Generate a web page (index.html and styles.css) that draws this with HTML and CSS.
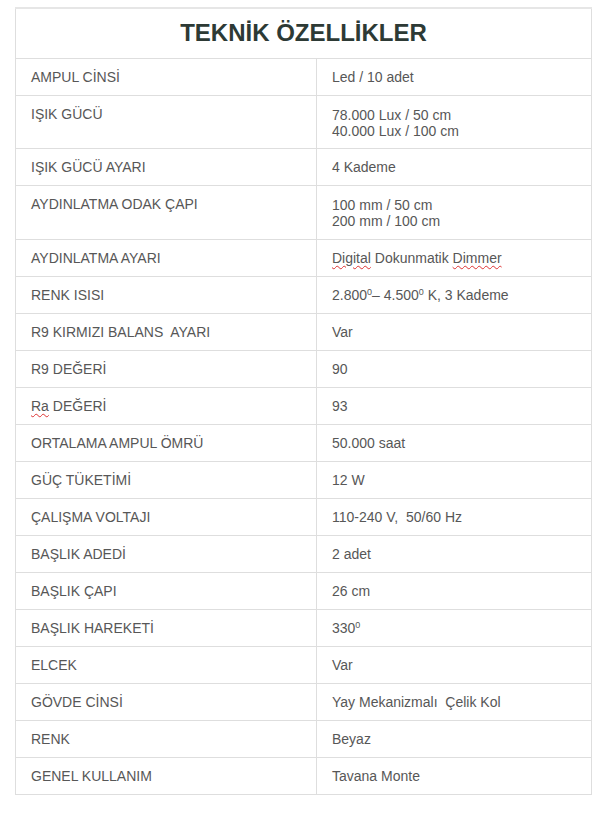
FILE: index.html
```html
<!DOCTYPE html>
<html lang="tr">
<head>
<meta charset="utf-8">
<title>Teknik Özellikler</title>
<link rel="stylesheet" href="styles.css">
</head>
<body>
<table class="spec">
  <colgroup><col class="col-key"><col class="col-val"></colgroup>
  <thead>
    <tr><th colspan="2" class="title">TEKNİK ÖZELLİKLER</th></tr>
  </thead>
  <tbody>
    <tr><td>AMPUL CİNSİ</td><td>Led / 10 adet</td></tr>
    <tr class="multi"><td>IŞIK GÜCÜ</td><td class="lines">78.000 Lux / 50 cm<br>40.000 Lux / 100 cm</td></tr>
    <tr><td>IŞIK GÜCÜ AYARI</td><td>4 Kademe</td></tr>
    <tr class="multi"><td>AYDINLATMA ODAK ÇAPI</td><td class="lines lines-tall">100 mm / 50 cm<br>200 mm / 100 cm</td></tr>
    <tr><td>AYDINLATMA AYARI</td><td><span class="spell">Digital</span> Dokunmatik <span class="spell">Dimmer</span></td></tr>
    <tr><td>RENK ISISI</td><td>2.800<sup>0</sup>– 4.500<sup>0</sup> K, 3 Kademe</td></tr>
    <tr><td>R9 KIRMIZI BALANS&nbsp; AYARI</td><td>Var</td></tr>
    <tr><td>R9 DEĞERİ</td><td>90</td></tr>
    <tr><td><span class="spell">Ra</span> DEĞERİ</td><td>93</td></tr>
    <tr><td>ORTALAMA AMPUL ÖMRÜ</td><td>50.000 saat</td></tr>
    <tr><td>GÜÇ TÜKETİMİ</td><td>12 W</td></tr>
    <tr><td>ÇALIŞMA VOLTAJI</td><td>110-240 V,&nbsp; 50/60 Hz</td></tr>
    <tr><td>BAŞLIK ADEDİ</td><td>2 adet</td></tr>
    <tr><td>BAŞLIK ÇAPI</td><td>26 cm</td></tr>
    <tr><td>BAŞLIK HAREKETİ</td><td>330<sup>0</sup></td></tr>
    <tr><td>ELCEK</td><td>Var</td></tr>
    <tr><td>GÖVDE CİNSİ</td><td>Yay Mekanizmalı&nbsp; Çelik Kol</td></tr>
    <tr><td>RENK</td><td>Beyaz</td></tr>
    <tr><td>GENEL KULLANIM</td><td>Tavana Monte</td></tr>
  </tbody>
</table>
</body>
</html>
```

FILE: styles.css
```css
html, body {
  margin: 0;
  padding: 0;
  background: #ffffff;
}

body {
  font-family: "Liberation Sans", Arial, sans-serif;
  font-size: 14px;
  color: #575757;
}

.spec {
  border-collapse: collapse;
  table-layout: fixed;
  width: 577px;
  margin: 7px 0 0 15px;
  border-top: 2px solid #e6e6e6;
}

.col-key {
  width: 301px;
}

.spec th,
.spec td {
  border: 1px solid #dedede;
  padding: 8px 15px;
  line-height: 20px;
  text-align: left;
  vertical-align: top;
  font-weight: normal;
}

.spec thead tr:first-child th {
  border-top: 2px solid #e6e6e6;
}

.spec .title {
  text-align: center;
  font-size: 24px;
  font-weight: bold;
  line-height: 34px;
  padding: 7px 0 8px;
  color: #2d3a35;
}

.spec td.lines {
  line-height: 16px;
  padding-top: 11px;
  padding-bottom: 9px;
}

.spec td.lines-tall {
  padding-bottom: 10px;
}

.spec sup {
  font-size: 9px;
  line-height: 0;
  vertical-align: 5px;
}

.spell {
  text-decoration: underline wavy #d33;
  text-decoration-thickness: 1px;
  text-underline-offset: 2px;
}
```
